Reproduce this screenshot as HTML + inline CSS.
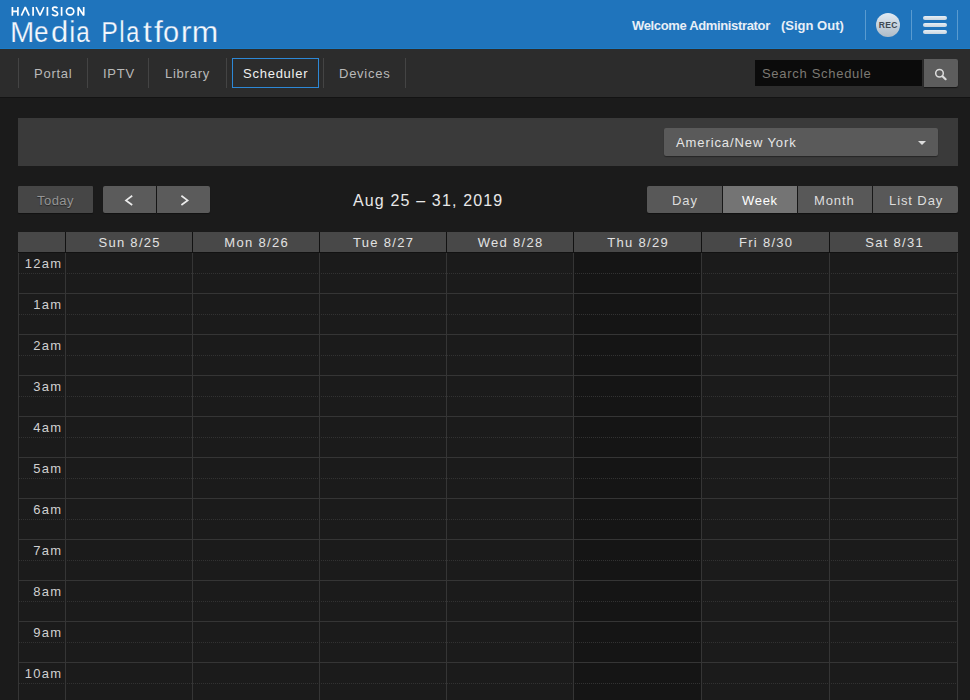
<!DOCTYPE html>
<html><head><meta charset="utf-8">
<style>
*{margin:0;padding:0;box-sizing:border-box}
html,body{width:970px;height:700px;overflow:hidden;background:#1b1b1b;font-family:"Liberation Sans",sans-serif;}
.a{position:absolute}
span{white-space:pre}
#hdr{position:absolute;left:0;top:0;width:970px;height:49px;background:#1f74bc;border-bottom:1px solid #1a7cc8}
#brand1{position:absolute;left:11px;top:6px;color:#fff;font-size:11px;font-weight:bold;letter-spacing:2px}
.bl{position:absolute;top:18px;color:#f4f8fc;font-size:29px;line-height:1;-webkit-text-stroke:0.25px #1f74bc}
.w{position:absolute;top:18px;color:#e8eff7;font-size:13px;font-weight:bold}
#welcome{letter-spacing:-0.35px}
.hsep{position:absolute;top:10px;width:1px;height:30px;background:#5a9bd0}
#rec{position:absolute;left:876px;top:13px;width:24px;height:24px;border-radius:50%;background:linear-gradient(#e0eaf3,#aebbc7);color:#3e4852;font-size:8.5px;font-weight:bold;text-align:center;line-height:25px;letter-spacing:0.3px;padding-left:0.3px}
.bar{position:absolute;left:923px;width:24px;height:4px;border-radius:2px;background:linear-gradient(#e6eef5,#c9d5e0)}
#nav{position:absolute;left:0;top:49px;width:970px;height:49px;background:#2c2c2c;border-bottom:1px solid #131313}
.nsep{position:absolute;top:58px;width:1px;height:30px;background:#444}
.ni{position:absolute;top:66px;color:#b9b9b9;font-size:13px;letter-spacing:0.75px}
#schedbox{position:absolute;left:232px;top:58px;width:87px;height:30px;border:1px solid #2d88d6}
#searchbox{position:absolute;left:755px;top:60px;width:167px;height:26px;background:#0b0b0b}
#search{position:absolute;left:762px;top:66px;color:#7c7973;font-size:13px;letter-spacing:0.7px}
#sbtn{position:absolute;left:924px;top:59px;width:34px;height:28px;background:#5d5d5d;border-radius:0 2px 2px 0;box-shadow:0 1px 1px rgba(0,0,0,0.5)}
#panel{position:absolute;left:18px;top:118px;width:940px;height:48px;background:#3a3a3a}
#tzbox{position:absolute;left:664px;top:128px;width:274px;height:28px;background:#5a5a5a;border-radius:2px;box-shadow:0 1px 1px rgba(0,0,0,0.35)}
#tz{position:absolute;left:676px;top:135px;color:#e6e6e6;font-size:13px;letter-spacing:0.9px}
.caret{position:absolute;left:918px;top:141px;width:0;height:0;border-left:4px solid transparent;border-right:4px solid transparent;border-top:4px solid #ddd}
.btn{position:absolute;top:186px;height:27px;background:#585858;border-radius:2px;box-shadow:0 1px 1px rgba(0,0,0,0.35)}
.bt{position:absolute;top:193px;color:#ddd;font-size:13px;letter-spacing:0.9px}
#today{letter-spacing:0.47px}#week{letter-spacing:0.7px}
#title{position:absolute;left:353px;top:192px;color:#e8e8e8;font-size:16px;letter-spacing:1.15px}
.gh{position:absolute;height:20px;background:#484848;color:#e2e2e2;font-size:13px;text-align:center;line-height:21px;letter-spacing:1.3px;padding-left:1.3px}
.today{position:absolute;background:#151515}
.hl{position:absolute;left:18px;width:940px;height:1px;background:#353535}
.hd{position:absolute;left:18px;width:940px;height:0;border-top:1px dotted #323232}
.vl{position:absolute;width:1px;height:447px;background:#353535}
.tl{position:absolute;left:18px;width:43px;text-align:right;color:#d0d0d0;font-size:13px;letter-spacing:1.2px}
.tl span{margin-right:-1.2px}
</style></head><body>
<div id="hdr"></div>
<svg class="a" style="left:0;top:0" width="100" height="20" viewBox="0 0 100 20" fill="none" stroke="#fff" stroke-width="1.7" stroke-linejoin="bevel">
<path d="M12.4 7V15.7M17.9 7V15.7M12.4 11.3H17.9"/>
<path d="M21.4 15.7L25.3 7.2L29.2 15.7"/>
<path d="M33.1 7V15.7M47.4 7V15.7M61.6 7V15.7"/>
<path d="M36.1 7L40 15.5L43.9 7"/>
<path d="M57.5 8.3C56.8 7.5 55.9 7.1 54.9 7.1C53.5 7.1 52.6 7.9 52.6 9.1C52.6 11.9 57.7 10.7 57.7 13.5C57.7 14.8 56.6 15.6 55.1 15.6C53.9 15.6 52.8 15.1 52 14.2"/>
<ellipse cx="70.1" cy="11.35" rx="3.7" ry="3.5"/>
<path d="M78.2 15.7V7.3L83.7 15.4V7"/>
</svg>
<span class="bl" style="left:9.53px;transform-origin:2.07px 0;transform:scaleX(1.006)">M</span>
<span class="bl" style="left:33.96px;transform-origin:1.04px 0;transform:scaleX(0.897)">e</span>
<span class="bl" style="left:50.96px;transform-origin:1.04px 0;transform:scaleX(1.069)">d</span>
<span class="bl" style="left:68.73px;transform-origin:2.07px 0;transform:scaleX(0.933)">i</span>
<span class="bl" style="left:75.86px;transform-origin:1.04px 0;transform:scaleX(0.837)">a</span>
<span class="bl" style="left:100.53px;transform-origin:2.07px 0;transform:scaleX(0.856)">P</span>
<span class="bl" style="left:119.23px;transform-origin:2.07px 0;transform:scaleX(0.837)">l</span>
<span class="bl" style="left:126.06px;transform-origin:1.04px 0;transform:scaleX(0.811)">a</span>
<span class="bl" style="left:142.60px;transform-origin:0.00px 0;transform:scaleX(1.086)">t</span>
<span class="bl" style="left:153.80px;transform-origin:0.00px 0;transform:scaleX(1.098)">f</span>
<span class="bl" style="left:162.96px;transform-origin:1.04px 0;transform:scaleX(1.000)">o</span>
<span class="bl" style="left:180.73px;transform-origin:2.07px 0;transform:scaleX(1.131)">r</span>
<span class="bl" style="left:191.93px;transform-origin:2.07px 0;transform:scaleX(1.096)">m</span>
<span class="w" id="welcome" style="left:632px">Welcome Administrator</span>
<span class="w" id="signout" style="left:781px">(Sign Out)</span>
<div class="hsep" style="left:865px"></div>
<div class="hsep" style="left:911px"></div>
<div class="hsep" style="left:957px"></div>
<div id="rec">REC</div>
<div class="bar" style="top:16px"></div>
<div class="bar" style="top:23px"></div>
<div class="bar" style="top:30px"></div>
<div id="nav"></div>
<div class="nsep" style="left:18px"></div>
<div class="nsep" style="left:87px"></div>
<div class="nsep" style="left:148px"></div>
<div class="nsep" style="left:226px"></div>
<div class="nsep" style="left:323px"></div>
<div class="nsep" style="left:405px"></div>
<span class="ni" id="portal" style="left:34px">Portal</span>
<span class="ni" id="iptv" style="left:103px">IPTV</span>
<span class="ni" id="library" style="left:165px">Library</span>
<div id="schedbox"></div>
<span class="ni" id="scheduler" style="left:243px;color:#f0f0f0">Scheduler</span>
<span class="ni" id="devices" style="left:339px">Devices</span>
<div id="searchbox"></div>
<span id="search">Search Schedule</span>
<div id="sbtn"></div>
<svg class="a" style="left:920px;top:55px" width="40" height="35" viewBox="920 55 40 35" fill="none" stroke="#dcdcdc">
<circle cx="939.5" cy="73.2" r="3.8" stroke-width="1.5"/>
<path d="M942.5 76.3L945.6 79.2" stroke-width="2.2" stroke-linecap="round"/>
</svg>
<div id="panel"></div>
<div id="tzbox"></div>
<span id="tz">America/New York</span>
<div class="caret"></div>
<div class="btn" style="left:18px;width:75px;background:#464646;border-radius:1px"></div>
<span class="bt" id="today" style="left:37px;color:#959595;text-shadow:0 1px 1px rgba(0,0,0,0.45)">Today</span>
<div class="btn" style="left:103px;width:53px;background:#5b5b5b;border-radius:2px 0 0 2px"></div>
<div class="btn" style="left:157px;width:53px;background:#5b5b5b;border-radius:0 2px 2px 0"></div>
<div class="a" style="left:156px;top:186px;width:1px;height:27px;background:#151515"></div>
<svg class="a" style="left:100px;top:180px" width="120" height="40" viewBox="100 180 120 40" fill="none" stroke="#ececec" stroke-width="1.7" stroke-linecap="butt">
<path d="M132.2 195.8L126 200.4L132.2 205"/>
<path d="M181.4 195.8L187.6 200.4L181.4 205"/>
</svg>
<span id="title">Aug 25 &ndash; 31, 2019</span>
<div class="btn" style="left:647px;width:75px;border-radius:2px 0 0 2px"></div>
<div class="btn" style="left:723px;width:74px;background:#747474;border-radius:0"></div>
<div class="btn" style="left:798px;width:74px;border-radius:0"></div>
<div class="btn" style="left:873px;width:85px;border-radius:0 2px 2px 0"></div>
<span class="bt" id="day" style="left:672px">Day</span>
<span class="bt" id="week" style="left:742px;color:#fff">Week</span>
<span class="bt" id="month" style="left:814px">Month</span>
<span class="bt" id="listday" style="left:889px">List Day</span>
<div class="a" style="left:18px;top:232px;width:940px;height:21px;background:#121212"></div>
<div class="gh" style="left:18px;top:232px;width:47px"></div>
<div class="gh" style="left:66px;top:232px;width:126px"><span id="sun">Sun 8/25</span></div>
<div class="gh" style="left:193px;top:232px;width:126px"><span id="mon">Mon 8/26</span></div>
<div class="gh" style="left:320px;top:232px;width:126px"><span id="tue">Tue 8/27</span></div>
<div class="gh" style="left:447px;top:232px;width:126px"><span id="wed">Wed 8/28</span></div>
<div class="gh" style="left:574px;top:232px;width:127px"><span id="thu">Thu 8/29</span></div>
<div class="gh" style="left:702px;top:232px;width:127px"><span id="fri">Fri 8/30</span></div>
<div class="gh" style="left:830px;top:232px;width:128px"><span id="sat">Sat 8/31</span></div>
<div class="today" style="left:574px;top:253px;width:127px;height:447px"></div>
<div class="hd" style="top:273px"></div>
<div class="tl" style="top:256px"><span id="h0">12am</span></div>
<div class="hl" style="top:293px"></div>
<div class="hd" style="top:314px"></div>
<div class="tl" style="top:297px"><span id="h1">1am</span></div>
<div class="hl" style="top:334px"></div>
<div class="hd" style="top:355px"></div>
<div class="tl" style="top:338px"><span id="h2">2am</span></div>
<div class="hl" style="top:375px"></div>
<div class="hd" style="top:396px"></div>
<div class="tl" style="top:379px"><span id="h3">3am</span></div>
<div class="hl" style="top:416px"></div>
<div class="hd" style="top:437px"></div>
<div class="tl" style="top:420px"><span id="h4">4am</span></div>
<div class="hl" style="top:457px"></div>
<div class="hd" style="top:478px"></div>
<div class="tl" style="top:461px"><span id="h5">5am</span></div>
<div class="hl" style="top:498px"></div>
<div class="hd" style="top:519px"></div>
<div class="tl" style="top:502px"><span id="h6">6am</span></div>
<div class="hl" style="top:539px"></div>
<div class="hd" style="top:560px"></div>
<div class="tl" style="top:543px"><span id="h7">7am</span></div>
<div class="hl" style="top:580px"></div>
<div class="hd" style="top:601px"></div>
<div class="tl" style="top:584px"><span id="h8">8am</span></div>
<div class="hl" style="top:621px"></div>
<div class="hd" style="top:642px"></div>
<div class="tl" style="top:625px"><span id="h9">9am</span></div>
<div class="hl" style="top:662px"></div>
<div class="hd" style="top:683px"></div>
<div class="tl" style="top:666px"><span id="h10">10am</span></div>
<div class="hl" style="top:703px"></div>
<div class="hd" style="top:724px"></div>
<div class="tl" style="top:707px"><span id="h11">11am</span></div>
<div class="vl" style="left:18px;top:253px"></div>
<div class="vl" style="left:65px;top:253px"></div>
<div class="vl" style="left:192px;top:253px"></div>
<div class="vl" style="left:319px;top:253px"></div>
<div class="vl" style="left:446px;top:253px"></div>
<div class="vl" style="left:573px;top:253px"></div>
<div class="vl" style="left:701px;top:253px"></div>
<div class="vl" style="left:829px;top:253px"></div>
<div class="vl" style="left:957px;top:253px"></div>
</body></html>
